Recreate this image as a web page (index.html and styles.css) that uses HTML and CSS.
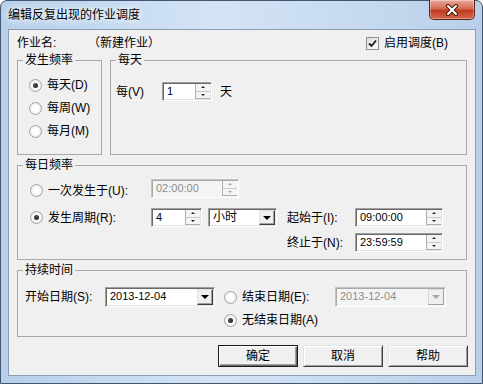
FILE: index.html
```html
<!DOCTYPE html>
<html lang="zh-CN">
<head>
  <meta charset="UTF-8">
  <title>编辑反复出现的作业调度</title>
  <link rel="stylesheet" href="styles.css">
</head>
<body>
  <div class="window">
    <div class="titlebar">
      <span class="title">编辑反复出现的作业调度</span>
      <span class="close">
        <svg width="14" height="12" viewBox="0 0 14 12">
          <path d="M3 2 L11 10 M11 2 L3 10" stroke="#4a1a10" stroke-width="4" stroke-linecap="round"/>
          <path d="M3 2 L11 10 M11 2 L3 10" stroke="#fff" stroke-width="2" stroke-linecap="round"/>
        </svg>
      </span>
    </div>

    <div class="client">
      <div class="job-row">
        <span>作业名:</span>
        <span>（新建作业）</span>
        <label class="check">
          <span class="box">
            <svg width="11" height="11" viewBox="0 0 11 11"><path d="M2 5.5 L4.5 8 L9 2.5" fill="none" stroke="#1a1a1a" stroke-width="1.8"/></svg>
          </span>
          启用调度(B)
        </label>
      </div>

      <div class="top-groups">
        <fieldset class="group freq">
          <legend>发生频率</legend>
          <div class="freq-body">
            <label class="opt"><span class="radio on"></span>每天(D)</label>
            <label class="opt"><span class="radio"></span>每周(W)</label>
            <label class="opt"><span class="radio"></span>每月(M)</label>
          </div>
        </fieldset>

        <fieldset class="group daily">
          <legend>每天</legend>
          <div class="daily-body">
            <div class="daily-row">
              <span class="every">每(V)</span>
              <div class="spin w50"><span class="val">1</span><span class="arrows"><i class="up"></i><i class="down"></i></span></div>
              <span class="unit">天</span>
            </div>
          </div>
        </fieldset>
      </div>

      <fieldset class="group dayfreq">
        <legend>每日频率</legend>
        <div class="dayfreq-body">
          <label class="opt first"><span class="radio"></span>一次发生于(U):</label>
          <div class="spin w88 off span2"><span class="val">02:00:00</span><span class="arrows"><i class="up"></i><i class="down"></i></span></div>

          <label class="opt col1"><span class="radio on"></span>发生周期(R):</label>
          <div class="spin w51"><span class="val">4</span><span class="arrows"><i class="up"></i><i class="down"></i></span></div>
          <div class="combo w69"><span class="val cn">小时</span><span class="drop"></span></div>
          <span class="lbl">起始于(I):</span>
          <div class="spin w88"><span class="val">09:00:00</span><span class="arrows"><i class="up"></i><i class="down"></i></span></div>

          <span class="lbl col4">终止于(N):</span>
          <div class="spin w88"><span class="val">23:59:59</span><span class="arrows"><i class="up"></i><i class="down"></i></span></div>
        </div>
      </fieldset>

      <fieldset class="group duration">
        <legend>持续时间</legend>
        <div class="dur-body">
          <span class="lbl">开始日期(S):</span>
          <div class="combo w110"><span class="val">2013-12-04</span><span class="drop"></span></div>
          <label class="opt"><span class="radio"></span>结束日期(E):</label>
          <div class="combo w111 off"><span class="val">2013-12-04</span><span class="drop"></span></div>

          <label class="opt col3"><span class="radio on"></span>无结束日期(A)</label>
        </div>
      </fieldset>

      <div class="buttons">
        <button class="btn default">确定</button>
        <button class="btn">取消</button>
        <button class="btn">帮助</button>
      </div>
    </div>
  </div>
</body>
</html>
```

FILE: styles.css
```css
* {
  box-sizing: border-box;
}
body {
  margin: 0;
  font-family: "Liberation Sans", "Noto Sans CJK SC", sans-serif;
  font-size: 12px;
  line-height: 14px;
  color: #000;
  background: #fff;
}
.window {
  width: 483px;
  height: 384px;
  padding: 0 6px 7px 7px;
  display: flex;
  flex-direction: column;
  border: 1px solid #41576f;
  border-radius: 7px 7px 0 0;
  background: linear-gradient(90deg, #b7cfea, #d4e4f6 45%, #c6d9ef 75%, #b9cfe9);
}
.titlebar {
  height: 28px;
  display: flex;
  justify-content: space-between;
  align-items: flex-start;
}
.title {
  margin-top: 7px;
  text-shadow: 0 0 6px #fff, 0 0 10px #fff;
}
.close {
  width: 46px;
  height: 20px;
  margin: -1px 1px 0 0;
  display: flex;
  align-items: center;
  justify-content: center;
  border: 1px solid #5b2418;
  border-top: none;
  border-radius: 0 0 5px 5px;
  background: linear-gradient(#e9a99a, #d66b53 45%, #c23a20 55%, #d5674b);
  box-shadow: inset 0 0 0 1px rgba(255,255,255,0.35);
}
.client {
  flex: 1;
  background: #f0f0f0;
  border: 1px solid #8b9cb3;
  padding: 4px 8px 0;
}

/* top row */
.job-row {
  display: grid;
  grid-template-columns: 71px 278px auto;
  height: 18px;
  align-items: center;
}
.check {
  display: flex;
  align-items: center;
  gap: 5px;
}
.box {
  width: 13px;
  height: 13px;
  border: 1px solid #8e8f8f;
  background: linear-gradient(135deg, #dcdcdc, #fff);
  display: flex;
  align-items: center;
  justify-content: center;
}

/* group boxes */
.group {
  margin: 0;
  padding: 0;
  min-width: 0;
  border: 1px solid #a9a9a9;
}
.group legend {
  padding: 0 2px;
  margin-left: 5px;
  line-height: 14px;
}
.top-groups {
  display: flex;
  gap: 8px;
  margin-top: 1px;
}
.freq {
  width: 85px;
}
.daily {
  flex: 1;
}
.freq-body {
  height: 87px;
  padding: 9px 0 0 11px;
  display: flex;
  flex-direction: column;
  gap: 5px;
}
.opt {
  display: flex;
  align-items: center;
  gap: 5px;
  height: 18px;
  white-space: nowrap;
}
.radio {
  width: 13px;
  height: 13px;
  flex: none;
  border: 1px solid #a3a3a3;
  border-radius: 50%;
  background: radial-gradient(circle, #fff 30%, #e2e2e2 100%);
  display: flex;
  align-items: center;
  justify-content: center;
}
.radio.on::after {
  content: "";
  width: 5px;
  height: 5px;
  border-radius: 50%;
  background: radial-gradient(circle at 40% 40%, #555, #111);
}
.daily-body {
  height: 87px;
  padding: 15px 0 0 5px;
}
.daily-row {
  display: flex;
  align-items: center;
  height: 19px;
}
.every {
  width: 46px;
}
.unit {
  margin-left: 8px;
}

/* edit fields */
.spin, .combo {
  display: flex;
  height: 19px;
  padding: 1px;
  background: #fff;
  border: 1px solid;
  border-color: #a0a0a0 #fff #fff #a0a0a0;
  box-shadow: inset 1px 1px #696969, inset -1px -1px #e3e3e3;
  white-space: nowrap;
}
.val {
  flex: 1;
  padding-left: 3px;
  font-size: 11px;
  line-height: 15px;
  overflow: hidden;
}
.val.cn {
  font-size: 12px;
}
.arrows {
  width: 15px;
  display: flex;
  flex-direction: column;
  border: 1px solid #b0b0b0;
  border-width: 0 0 1px 1px;
  background: #f4f4f4;
}
.arrows i {
  flex: 1;
  display: flex;
  align-items: center;
  justify-content: center;
}
.arrows i::after {
  content: "";
  border-left: 2px solid transparent;
  border-right: 2px solid transparent;
}
.arrows .up {
  border-bottom: 1px solid #c8c8c8;
}
.arrows .up::after {
  border-bottom: 2px solid #222;
}
.arrows .down::after {
  border-top: 2px solid #222;
}
.drop {
  width: 16px;
  display: flex;
  align-items: center;
  justify-content: center;
  background: #f0f0f0;
  border: 1px solid;
  border-color: #e3e3e3 #404040 #404040 #e3e3e3;
  box-shadow: inset -1px -1px #a0a0a0;
}
.drop::after {
  content: "";
  border-left: 4px solid transparent;
  border-right: 4px solid transparent;
  border-top: 4px solid #000;
}
.off {
  color: #8d8d8d;
  background: #f4f4f4;
  border-color: #c4c4c4 #fff #fff #c4c4c4;
  box-shadow: inset 1px 1px #a8a8a8;
}
.off .arrows i::after {
  border-top-color: #a0a0a0;
  border-bottom-color: #a0a0a0;
}
.off .drop {
  border-color: #d8d8d8 #a0a0a0 #a0a0a0 #d8d8d8;
  box-shadow: none;
}
.off .drop::after {
  border-top-color: #a8a8a8;
}
.w50 { width: 50px; }
.w51 { width: 51px; }
.w69 { width: 69px; }
.w88 { width: 88px; }
.w110 { width: 110px; }
.w111 { width: 111px; }

/* daily frequency */
.dayfreq, .duration {
  margin-top: 3px;
}
.dayfreq-body {
  padding: 7px 0 7px 12px;
  display: grid;
  grid-template-columns: 121px 57px 79px 68px 88px;
  grid-template-rows: 19px 29px 25px;
  align-items: end;
  justify-items: start;
}
.dayfreq-body .opt, .dayfreq-body .lbl {
  height: 19px;
  display: flex;
  align-items: center;
}
.dayfreq-body .first {
  padding-top: 4px;
}
.span2 {
  grid-column: 2 / span 2;
}
.col1 { grid-column: 1; }
.col3 { grid-column: 3; }
.col4 { grid-column: 4; }

/* duration */
.dur-body {
  padding: 10px 0 7px 7px;
  display: grid;
  grid-template-columns: 80px 119px 111px 111px;
  grid-template-rows: 20px 18px;
  row-gap: 4px;
  align-items: center;
  justify-items: start;
}
.dur-body .combo {
  height: 20px;
}

/* buttons */
.buttons {
  display: flex;
  justify-content: flex-end;
  gap: 5px;
  margin: 8px -1px 0 0;
}
.btn {
  width: 80px;
  height: 22px;
  padding: 0;
  font: inherit;
  color: #000;
  background: #f0f0f0;
  border: 1px solid;
  border-color: #e3e3e3 #404040 #404040 #e3e3e3;
  box-shadow: inset 1px 1px #fff, inset -1px -1px #a0a0a0;
}
.btn.default {
  border-color: #1a1a1a;
  box-shadow: inset 1px 1px #fff, inset -1px -1px #696969, inset -2px -2px #a0a0a0;
}
```
